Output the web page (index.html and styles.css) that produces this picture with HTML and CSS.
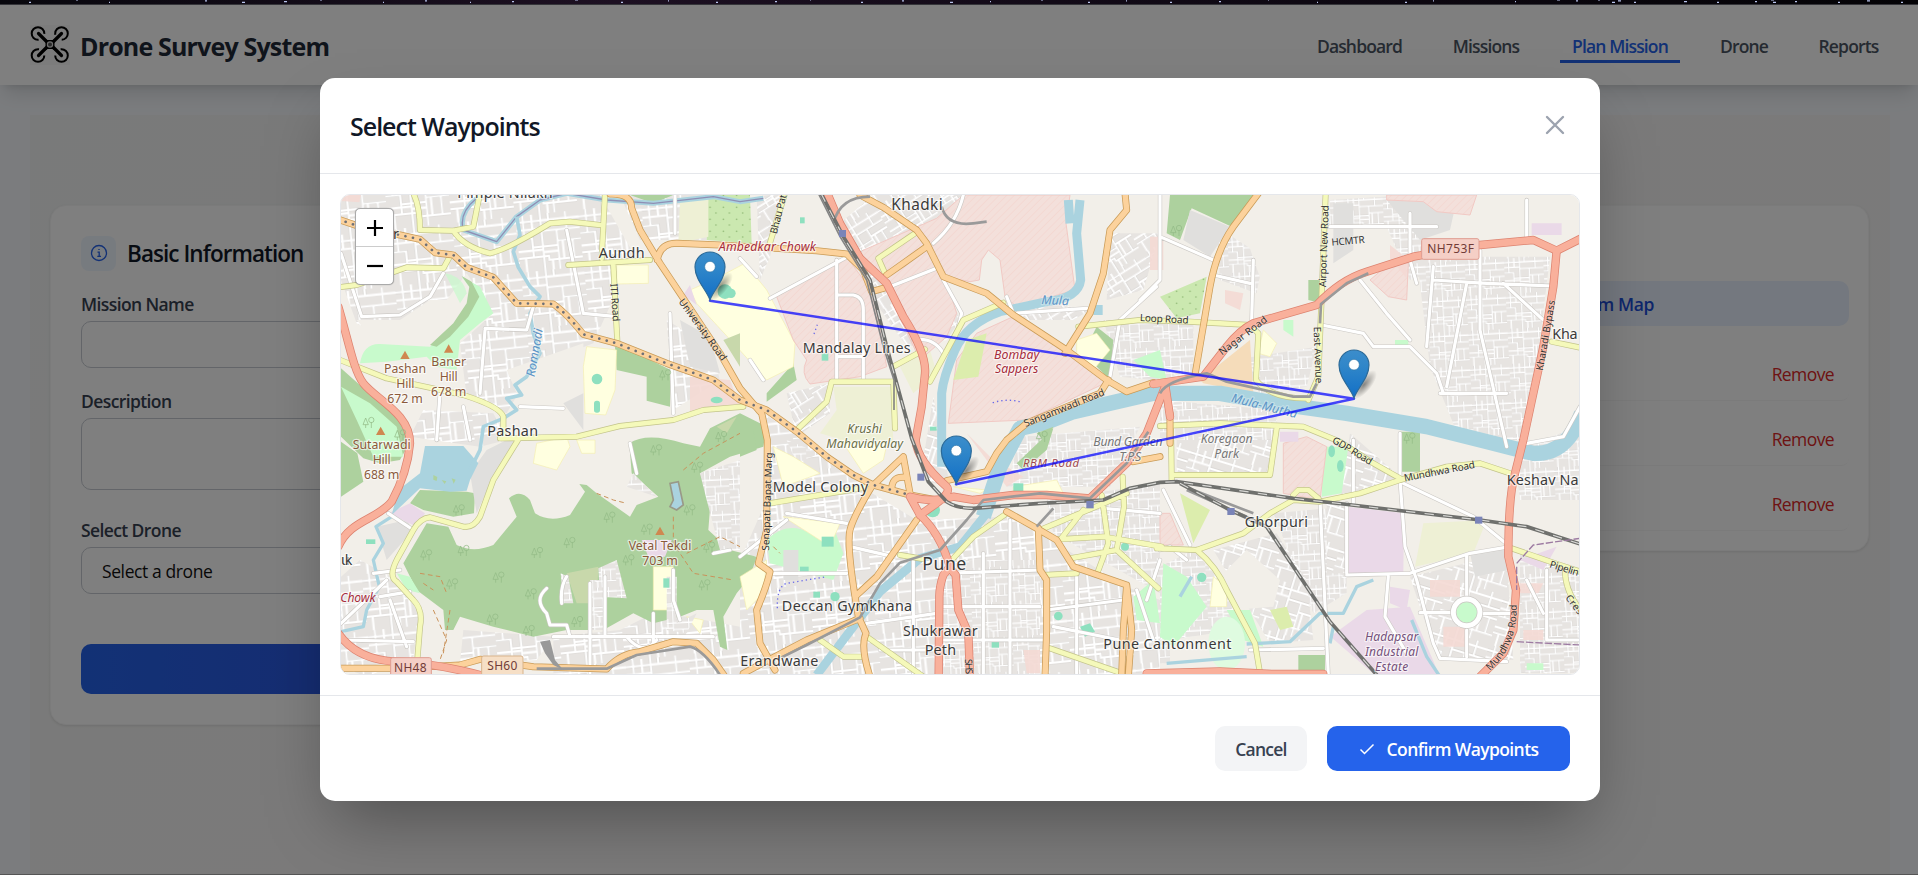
FILE: index.html
```html
<!DOCTYPE html>
<html lang="en">
<head>
<meta charset="utf-8">
<title>Drone Survey System</title>
<link rel="stylesheet" href="styles.css">
</head>
<body>
<svg class="sky" viewBox="0 0 1918 5" preserveAspectRatio="none" aria-hidden="true">
  <g class="stars">
    <path d="M29 3h2M76 0h2M109 3h1M205 1h2M242 3h3M284 2h3M320 0h2M383 3h1M425 1h2M470 3h1M512 2h2M575 0h3M621 3h2M668 1h1M716 3h2M775 2h2M810 0h1M861 3h2M902 1h2M950 3h3M990 2h1M1041 0h2M1088 3h2M1126 1h1M1170 3h2M1219 2h2M1268 0h1M1317 3h1M1405 3h2M1433 1h1M1515 2h1M1557 0h3M1576 1h2M1598 0h2M1612 3h3M1618 1h3M1634 3h2M1684 2h3M1717 3h2M1755 2h2M1771 0h3M1773 3h3M1795 2h2M1838 3h2M1867 1h3M1901 3h2"/>
  </g>
</svg>
<div class="app">
  <header class="topbar">
    <div class="brand">
      <svg class="logo" viewBox="0 0 40 40">
        <g fill="none" stroke="#000" stroke-width="2">
          <circle cx="8" cy="8.500" r="6.300" stroke-dasharray="31 8.600" stroke-dashoffset="-9"/>
          <circle cx="31.500" cy="8.500" r="6.300" stroke-dasharray="31 8.600" stroke-dashoffset="-18"/>
          <circle cx="8" cy="30.500" r="6.300" stroke-dasharray="31 8.600" stroke-dashoffset="1"/>
          <circle cx="31.500" cy="30.500" r="6.300" stroke-dasharray="31 8.600" stroke-dashoffset="-28"/>
          <path d="M8.500 8.500l8 8M31.500 8.500l-8 8M8.500 30.500l8-8M31.500 30.500l-8-8" stroke-width="3.200" stroke-linecap="round"/>
        </g>
        <path d="M13 12l4 3h6l4-3-2.500 5v5l3 5-5-3h-5l-5 3 3-5v-5z"/>
        <circle cx="20" cy="19.500" r="2.600" fill="#555" stroke="#ddd" stroke-width="1.200"/>
      </svg>
      <span class="brand-name">Drone Survey System</span>
    </div>
    <nav class="nav">
      <a class="n1">Dashboard</a><a class="n2">Missions</a><a class="n3 active">Plan Mission</a><a class="n4">Drone</a><a class="n5">Reports</a>
    </nav>
  </header>
  <main class="content">
    <section class="card form-card">
      <h2 class="card-title"><span class="badge"><svg viewBox="0 0 20 20"><circle cx="10" cy="10" r="7.500"/><path d="M8.500 9.200h1.700v4.100M8.300 13.400h3.700"/><path d="M10 6.300v.6" stroke-width="1.900"/></svg></span><span>Basic Information</span></h2>
      <label class="lbl l-name">Mission Name</label>
      <div class="field"></div>
      <label class="lbl l-desc">Description</label>
      <div class="field area"></div>
      <label class="lbl l-drone">Select Drone</label>
      <div class="field"><span class="f-text">Select a drone</span></div>
      <div class="submit"></div>
    </section>
    <section class="card way-card">
      <div class="map-btn">Select from Map</div>
      <div class="rows">
        <div class="row"><span>Remove</span></div>
        <div class="row"><span>Remove</span></div>
        <div class="row"><span>Remove</span></div>
      </div>
    </section>
  </main>
  <div class="overlay">
    <div class="modal">
      <div class="modal-head">
        <h3>Select Waypoints</h3>
        <svg class="close" viewBox="0 0 30 30"><path d="M7 7l16 16M23 7L7 23"/></svg>
      </div>
      <div class="modal-body">
        <div class="map">
<svg class="map-svg" viewBox="63 45 3714 1437" preserveAspectRatio="none">
<defs>
  <pattern id="st" width="190" height="170" patternUnits="userSpaceOnUse" patternTransform="rotate(-6)">
    <rect width="190" height="170" fill="#e7e4e1"/>
    <g fill="none" stroke="#cfcdca" stroke-width="8.500"><path d="M0 20H75V52H190M0 70H44V98H120V85H190M0 128H90V140H190M22 0V70M75 0V170M120 52V170M150 0V52M165 85V140M44 98V128M98 0V20"/></g>
    <g fill="none" stroke="#fff" stroke-width="6.500"><path d="M0 20H190M0 70H44V98H120V85H190M0 128H90V140H190M75 52H190M22 0V70M75 0V170M120 52V170M150 0V52M165 85V140M44 98V128M98 0V20M0 44H75M0 108H75M75 115H120M135 85V140M100 140V170M20 128V170M48 0V44"/></g>
  </pattern>
  <pattern id="st2" href="#st" patternTransform="rotate(17) scale(.9)"/>
  <pattern id="st3" href="#st" patternTransform="rotate(-3) scale(.62)"/>
  <pattern id="st4" href="#st" patternTransform="rotate(-32) scale(.8)"/>
  <pattern id="hatch" width="16" height="16" patternUnits="userSpaceOnUse" patternTransform="rotate(45)"><rect width="16" height="16" fill="#f3e0db"/><path d="M0 0V16" stroke="#f3d2cc" stroke-width="3"/></pattern>
  <pattern id="scrub" width="40" height="36" patternUnits="userSpaceOnUse"><rect width="40" height="36" fill="#cbe8b0"/><circle cx="10" cy="10" r="2.500" fill="#92bb78"/><circle cx="28" cy="27" r="2.500" fill="#92bb78"/></pattern>
  <linearGradient id="pinfill" x1="0" y1="0" x2="0" y2="1"><stop offset="0" stop-color="#3c8dcb"/><stop offset=".35" stop-color="#2f86c9"/><stop offset="1" stop-color="#126fc6"/></linearGradient>
  <radialGradient id="pinshade"><stop offset="0" stop-color="#000" stop-opacity=".45"/><stop offset="1" stop-color="#000" stop-opacity="0"/></radialGradient>
  <g id="tree" fill="none" stroke="#93bb87" stroke-width="2.200"><path d="M-8-14l-8 20h16zM-8 6v10M9-2v18"/><circle cx="9" cy="-8" r="8"/></g>
  <path id="peak" d="M0-13l14 25h-28z" fill="#cf8850"/>
  <g id="pin">
    <ellipse cx="30" cy="-42" rx="54" ry="22" transform="rotate(-50 30 -42)" fill="url(#pinshade)"/>
    <path d="M0-2C-10-32-45-62-45-101A45 45 0 0 1 45-101C45-62 10-32 0-2Z" fill="url(#pinfill)" stroke="#2c6a98" stroke-width="3.500"/>
    <circle cy="-102" r="16" fill="#fff" stroke="#2f75a8" stroke-width="2"/>
  </g>
  <g id="trunk">
    <path d="M55 380C85 480 100 570 130 610C170 660 270 700 270 790C265 850 250 900 215 965C170 1020 90 1020 55 1100"/>
    <path d="M55 1360Q110 1440 230 1445T500 1490"/>
    <path d="M1522 40L1560 130 1620 235 1700 310 1750 410Q1820 520 1815 580L1805 680 1787 780Q1790 840 1880 920Q1895 935 1850 970L1800 1005 1770 950Q1840 970 1900 950L1960 960 2080 945 2180 945 2310 955 2420 850 2480 760 2535 620"/>
    <path d="M2500 612L2650 590 2720 500Q2760 450 2800 430L2990 375Q3060 300 3140 275L3280 230 3480 195 3640 180 3710 212 3790 172"/>
    <path d="M3710 212L3700 320 3670 500 3610 780 3585 880Q3565 950 3565 1130L3588 1230 3580 1350 3550 1420 3480 1490"/>
    <path d="M1800 1005Q1860 1060 1890 1160L1870 1185Q1858 1220 1858 1250L1856 1490M1890 1165L1907 1185 1915 1290 1945 1360 1950 1490M2535 610L2550 710M2480 1480L2700 1474 2860 1482H3010"/>
  </g>
  <g id="primary">
    <path id="dotroad" d="M55 118L120 140 240 165 300 178 345 218 400 225 440 262 520 292 590 370 700 372Q740 400 790 463L890 490 1040 550 1180 600 1260 660 1340 690 1430 755 1520 830 1600 885 1660 915 1770 945 1850 960"/>
    <path d="M870 42Q935 40 935 85L960 150 1020 250 1100 370 1200 520 1260 625 1320 695M1012 240Q1020 190 1070 190L1200 195 1490 212 1580 222 1630 270 1655 335 1700 322"/>
    <path d="M1620 45L1690 82 1790 150 1820 190 1870 290 2000 340 2080 405 2240 510 2360 600 2420 635 2500 608M2415 40L2420 90 2370 150 2350 280 2310 400 2235 520M2815 40L2740 140Q2690 210 2670 320L2625 585M2365 600L2340 640 2120 730 2060 780 2030 820 2000 875 1880 902"/>
    <path d="M1820 200L1750 250 1700 285M1325 700L1342 780 1340 1050 1315 1150 1350 1175Q1340 1220 1310 1290L1320 1390 1365 1470M1655 920Q1600 1010 1590 1050T1605 1250L1670 1190 1790 1020M1655 920L1750 830 1770 940M1715 930Q1715 890 1750 892M1605 1250L1615 1310 1638 1360Q1620 1400 1650 1490M1270 1480L1460 1380 1620 1315"/>
    <path d="M55 1465H240L420 1455 480 1438 640 1460 860 1467Q900 1420 960 1415L1060 1385 1130 1390 1180 1440 1215 1490M2060 995L2150 1045 2210 1080 2260 1160 2420 1215 2410 1350 2405 1490M2155 1045L2160 1170 2180 1200 2180 1350 2175 1490M2420 1215L2435 1350 2425 1490M2550 700L2550 790M2520 830L2440 845"/>
  </g>
  <g id="second">
    <path d="M280 40Q300 80 300 150L400 152Q430 200 510 220Q560 210 690 130L750 125 840 135M480 40L460 140 400 152M855 40L845 235M745 255L990 240M880 255L892 485M55 322L110 315 260 262 370 265 388 232"/>
    <path d="M55 538L200 595 430 645Q540 680 550 710V770M540 775L770 770 900 738 1060 720 1150 690 1270 680M600 770L520 900 480 1010Q460 1045 430 1040L330 1012Q300 1015 280 1050L230 1140Q205 1190 230 1205L280 1260Q310 1290 300 1340L292 1440"/>
    <path d="M1395 40L1345 205M1785 160L1675 235 1695 280M2050 368L1930 420 1830 605M1720 560L1815 508M1430 750L1520 665 1535 605 1720 605 1725 745M2275 440L2460 420 2610 425 2790 435 2815 460 2808 600Q2850 655 2960 655M3017 40L3005 350 2995 590 2965 660"/>
    <path d="M2520 738L2700 730 2950 740 3060 785 3160 850 3240 895M2555 900L2553 740M2560 885H2850L2870 745M2510 1105L2630 1110 2770 1060 2850 1000 2920 960 3000 965 3120 940 3240 900 3380 860 3480 850 3570 880M2920 945L2935 930H2965L2995 955M2630 1110Q2690 1160 2720 1230L2805 1390 2820 1480M3575 1105L3720 1155 3790 1178M3735 1170Q3735 1240 3790 1300M3695 485L3790 505"/>
    <path d="M1350 970L1650 920M2060 1000L1960 1070 1895 1140M2160 1050L2340 975 2420 940M2220 1080L2290 990M2215 1078L2350 1070 2525 1100M2250 1135L2390 1110 2515 1225M2345 945L2365 1090 2330 1185M2408 890L2412 980 2390 1110M2170 1185L2270 1180M2190 1405L2400 1478M1640 1370L1810 1490M1500 1380L1570 1430H1625M1740 1125L1810 1137"/>
  </g>
  <g id="local">
    <path d="M63 220L125 410 240 405 330 350 370 280M495 450L480 640M495 445L620 450 640 380M740 150L790 400 890 410M1065 45V160M1050 400L1060 700M360 640L350 780M430 680L450 780M600 680L730 685M1260 235L1310 290M1290 540L1330 600"/>
    <path d="M1550 240V600M1550 345H1600Q1630 350 1630 390V600M1550 530H1630M1350 355L1620 210M1660 340L1850 265M1930 45Q1910 130 1840 190M1870 300L1925 400 1915 440M1780 480Q1840 470 1870 520M2060 350L2080 400 2300 385M2510 320L2400 420 2370 590"/>
    <path d="M2520 170L2680 240M2520 45V300L2460 360M2680 285L2790 310M2800 240L2795 420M3120 300L3200 400 3270 480M3005 435L3130 460 3160 500H3270L3350 580 3370 640M3480 210V450L3560 800M3440 310L3380 620M3270 100V240L3290 310M3340 260L3320 500M3030 140H3350M3620 60V180M3340 300L3500 310 3700 318M3550 310L3670 420M3780 680L3730 770 3620 790M3360 640L3560 640"/>
    <path d="M3000 960L3025 1485M3240 900L3255 1100 3290 1200 3340 1390 3360 1435 3560 1445M3250 910L3460 1010 3570 1100M3080 970V1180M3080 1185L3270 1180 3450 1120 3570 1100M3440 1125V1260M3300 1298H3390M3480 1300H3580M3440 1350V1430M3205 1190L3195 1310 3260 1420M2520 1110L2550 1100 2600 1140M2520 1140L2480 1260M2530 930L2610 1095M2790 1410L3010 1405M3100 970V780M3240 760V890M3680 1170V1380H3780M3620 1200L3670 1300"/>
    <path d="M205 1000L280 1050M180 1250L270 1235M63 1380L280 1385M63 1330L200 1200M160 1180L240 1170M210 1260L260 1400M680 1225Q640 1260 680 1300L690 1335H740L750 1370M810 1210V1480M855 1190V1370M700 1370H1180M1000 1300V1400M1060 1170V1260L1080 1320M920 1370Q970 1430 1010 1380M1180 1120L1230 1110M930 790L950 880M740 1190Q720 1220 725 1270"/>
    <path d="M1400 1000L1580 1030M1400 1020L1260 1130M1350 1180H1580M1590 1100L1720 1130M1870 1180L2160 1170M1870 1280H2160M1870 1380H2170M1780 1130V1480M1990 1120V1480M2070 1020V1480M1640 1330L1850 1300M1680 1410H1860M2180 1290L2410 1260M2200 1340L2400 1380M2270 1180V1480M2450 1230L2500 1380M2520 1000L2350 985"/>
  </g>
  <g id="rail"><path d="M1503 40L1570 170 1650 300 1700 500 1775 775 1825 905 1880 965Q1910 985 1960 985L2160 970 2350 960 2430 925 2520 907 2570 905 2920 955 3070 972 3480 1020 3620 1040 3790 1095M2580 910L2730 990 2840 1040 3030 1325 3175 1490"/></g>
</defs>
<rect x="60" y="40" width="3730" height="1450" fill="#f2efe9"/>
<g>
  <path fill="url(#st)" d="M63 45H840L940 220 820 490 640 560 560 700 440 650 420 490 520 400 440 280 350 400 210 480 110 430 63 300zM270 770L310 690 520 700 560 780 480 800zM900 45H1160V180H960zM1040 420L1170 500 1200 600 1060 690z"/>
  <path fill="url(#st4)" d="M1560 130L1660 45H1930L1830 190 1920 420 1880 480 1760 500 1640 330zM1400 640L1530 610V700L1430 770zM2080 350L2310 390 2260 420 2090 420zM2370 160H2520L2470 330 2360 360zM1310 50L1390 40 1350 230 1320 300z"/>
  <path fill="url(#st3)" d="M2350 420L2520 430 2620 430V580L2500 600 2400 590zM2690 140L2830 230 2810 340 2700 300zM2740 540L2990 500 2960 620 2820 640zM3030 60L3280 45 3330 280 3270 300 3200 140H3030zM3290 230H3690L3650 560 3600 780 3420 780 3330 560zM2520 660L2870 690V780H2520zM3580 810L3777 740V960H3600z"/>
  <path fill="url(#st)" d="M1260 1140L1340 960 1640 930 1790 1020 2060 1010 2160 1060 2420 1220 2520 1260V1485H1260zM1330 700L1450 780 1640 920 1360 960zM140 1490L63 1460V1190L120 1140 230 1200 300 1290 280 1430zM700 1370L900 1350 1000 1300 1100 1310 1260 1340V1485H700zM430 1350L700 1370 650 1440 420 1450z"/>
  <path fill="url(#st3)" d="M1860 1140H2160V1485H1870zM2180 960L2520 910V1240L2200 1060zM2100 770L2460 740 2370 920 2060 920zM2520 1160L2620 1110 2700 1200 2780 1380 2600 1450H2520zM2860 1000L3080 980V1240L2980 1300 2920 1150zM1400 780L1500 820 1430 850zM3600 1120L3777 1180V1480H3600z"/>
  <path fill="url(#st2)" d="M2570 780H2860L2840 880H2570zM3020 960L3080 970 3070 1180H3020zM3270 1190L3560 1120 3580 1440 3350 1430zM3090 760L3240 890 3060 960zM1840 650L1890 920 1800 900zM2680 1110L2870 1060 2960 1200 2980 1380 2850 1390z"/>
</g>
<g fill="#f2efe9">
  <path d="M110 420L240 420 330 360 400 360 350 490 160 480zM560 570L790 490 790 640 690 690 590 640zM2750 90L2810 45H3010V330L2850 380zM3020 400L3180 350 3190 440 3010 450zM2820 45h200v340h-130zM3330 60H3620V170L3480 190 3330 130zM2640 950L2760 1050 2640 1100zM2700 1190L2780 1110 2880 1200 2860 1280 2740 1290zM2550 1380l130-20 60 110h-190z"/>
</g>
<g fill="#add19e">
  <path d="M320 1030L385 1040 410 1095Q460 1120 520 1095L590 1010 567 955Q600 925 630 960L645 1000Q690 1030 750 1005L795 935 778 912 800 915 830 940 930 1010 950 975 1015 950 935 880 928 790Q980 755 1090 790L1140 800 1170 745 1260 700 1340 740 1330 800 1230 830 1140 880 1172 960 1165 1050 1230 1110 1310 1130 1290 1190 1250 1240 1210 1310 1222 1410 1200 1400 1180 1290 1130 1290 1080 1310 1000 1330 940 1300 850 1350 740 1350 640 1370 520 1340 420 1310 400 1350 375 1350 370 1290 290 1230 250 1150z"/>
  <path d="M63 565L170 660 250 720 268 790 240 840 180 850 130 835 63 770zM63 785L112 820 130 905 63 950zM300 930L440 935 465 940 462 1000 400 1010 310 990 270 970zM885 500L930 510 1052 570 1050 680 980 662V590L890 570zM2550 45H2815L2735 140 2615 85 2580 180 2540 160zM1340 640L1420 550 1430 600 1340 665zM3240 755h60v120h-60zM2290 520L2330 440 2380 480 2370 600zM2935 1425h80v60h-80zM2965 300h40v70l-40-10zM1260 750h40l10 60-50 20zM930 45h130l-60 25z"/>
</g>
<g fill="#c8facc">
  <path d="M120 550Q130 490 180 492L330 500 440 400 462 340 425 290 480 320 520 400 480 430 420 480 410 570 350 560 320 530 200 545zM63 620L150 670 230 740 250 830 160 830 110 720zM230 1180L270 1190 300 1240 260 1230zM1340 1080Q1400 1020 1470 1060L1540 1040 1570 1120 1540 1200 1350 1150zM2440 1250L2500 1200 2520 1330 2450 1320zM2530 1150L2600 1190 2660 1280 2560 1400 2520 1370zM3010 800h75l-20 140-60 10zM2720 1290h70l40 110-60-20zM2440 540l80-30 20 90-50-10zM2890 420h30v50l-30-20zM3620 1450h50v20h-50zM3225 480h40v20h-40z"/>
  <ellipse cx="2720" cy="1390" rx="55" ry="80" fill="#dffbe0"/><path d="M375 280Q430 290 440 340L420 370Z" opacity=".7"/>
</g>
<path d="M330 495L400 430 440 370 448 320 425 288 455 305 478 350 445 410 390 470 350 500z" fill="#add19e"/>
<path fill="url(#scrub)" d="M1165 45H1290L1295 190 1160 180zM1260 400l40 10-10 50-40 10zM2520 350L2660 290 2640 400 2570 415z"/>
<g fill="#ffffe0" stroke="#f5efb0" stroke-width="2">
  <path d="M800 500L890 510 885 630 857 705 795 700 790 560zM890 255H985V310L890 312zM1110 330L1180 300 1275 250 1340 330 1425 490 1420 560 1340 600 1250 500 1130 370zM650 790L740 770 750 800 710 870 640 850zM770 780h55v40h-40zM1000 1160L1060 1160 1040 1290 1000 1290zM2270 480l60-20 40 50-50 60-50-30zM1360 800L1420 830 1500 880 1390 920zM1900 920l100 10-20 10zM2830 450l40 40-20 40-35-10zM1260 1190L1340 1140 1330 1240 1280 1290zM1550 760l160-10-20 90-60 40zM1390 1010L1560 1030 1530 1100zM2680 1190l40 30v60h-50zM2080 920l130-20 20 40-150 5zM1100 1310l50 10-10 40z"/>
</g>
<path fill="#eef0d5" d="M1540 620H1715L1720 790 1600 790 1500 760 1550 690zM1740 560L1830 510 1850 580 1780 640zM3310 1030L3500 1020 3460 1120 3285 1160zM1080 60h85v110l-90 20z"/>
<path fill="#e0dfdd" d="M500 810L560 780 600 790 520 890 470 1000 450 880zM170 1040l90-20 20 30-80 90zM1080 420L1170 470 1200 580 1110 560zM1390 1110h45v90h-45zM2610 90L2730 140 2670 230 2590 180zM3040 70h60v140l-60 40zM790 640l-60 30 60 80zM3450 1120l115-20v70l-100 20zM3200 60h210l-20 90-90 30z"/>
<g fill="url(#hatch)" stroke="#f1c9c4" stroke-width="3">
  <path d="M1370 350L1580 230 1660 340 1700 560 1620 590 1470 612Q1440 580 1460 540L1420 480zM1620 215L1850 115 1930 45H2250L2238 130 2265 330 2090 380 2055 350 2040 240 2005 210 1985 240 1978 300 1950 305 1875 290 1910 400 1880 470 1800 540 1700 330zM1885 730L1910 540 1970 460 2090 405 2240 510 2365 605 2120 720zM3200 45H3470L3450 105 3350 95 3310 65 3200 60zM3150 300L3220 240 3265 250 3260 360 3205 350zM2890 790L2960 770 3020 800 3000 960 2890 940zM2520 1000L2550 1000 2590 1095H2520z"/>
</g>
<path fill="#f4d9d4" d="M1110 590L1230 600 1260 680 1110 700zM63 45h60l-5 22-55-4zM3330 1200h90v50h-90zM3370 1340h70v60h-70zM3210 195l50 40v60l-50-60zM2490 170h40v100h-40zM3600 1210h70l-15 30h-60zM2110 1410h50v70h-40zM1940 760l70 70 100 60-50 30zM3610 1350h60v30h-60zM2715 330l55 10-10 50-45-20z" opacity=".9"/>
<path fill="#ead9e8" d="M3083 980L3252 1000 3250 1180H3083zM3030 1370L3140 1290 3270 1280 3330 1420 3360 1490H3170L3020 1360zM205 1000L270 970 315 1000 290 1040zM3635 130h90v35h-90zM965 1080h90l-20 50h-50zM1090 345l20-30 20 60zM3600 1140l110-40-40 70zM3210 1220l60 10-10 60-50-20zM2880 755h55v30h-55z"/>
<path fill="#f5dcba" d="M2640 600L2790 480 2800 640 2650 610z"/>
<path fill="#dcedad" d="M1900 600L1940 480 2000 460 1975 590zM2580 940L2670 990 2620 1090zM2850 1290l50-10 20 60-40 10z"/>
<path fill="#c8d8ab" d="M740 1180L835 1160 830 1270H770zM1210 480L1260 460V560zM1190 740l60-30-30 50z"/>
<path fill="url(#st3)" d="M722 1180L745 1190 760 1270H730zM835 1165L890 1140 920 1255 840 1250zM940 880l70 70-90-30zM1140 880L1260 840V1110H1200L1160 960zM810 1200h45v150h-45zM1040 1190h30v140l60-30-30 60-60-10z"/>
<g fill="#aad3df">
  <path d="M315 798H430L475 850 450 900 440 932 390 935 300 925 215 1005 235 930 300 880zM2320 375h28v30h-28z"/>
</g>
<g fill="none" stroke="#aad3df" stroke-linejoin="round">
  <path d="M470 55Q415 100 430 150L530 185 590 110 660 60 740 40 860 60 1000 70 1180 50 1260 65 1330 55" stroke-width="15"/>
  <path d="M470 55Q415 100 430 150L530 185 590 110 660 60 740 40 860 60 1000 70 1180 50 1260 65 1330 55" stroke="#8f8fb5" stroke-width="4"/>
  <path d="M590 110L600 165 580 215 595 262 630 320 660 350 630 400 640 460 660 520 620 590 585 615 605 645 560 655 590 690 550 715 490 740 480 810 450 870" stroke-width="11"/>
  <path d="M2245 60L2250 130M2280 60L2270 160 2282 300Q2275 355 2180 365L2040 395Q1940 430 1905 510T1865 640V860" stroke-width="27"/>
  <path d="M1490 1485L1600 1340 1680 1235 1800 1135 1920 1100 2000 1000" stroke-width="26"/>
  <path d="M1990 1010L2040 860 2100 745 2170 730 2260 695 2500 640 2700 640 2900 675 3080 700 3320 740 3500 785 3640 820Q3740 825 3785 700" stroke-width="46"/>
  <path d="M215 1010L168 1040 190 1090 160 1140 178 1220 140 1290 130 1340 63 1355M2780 1392L2910 1385 3000 1300 3070 1300 3110 1220 3160 1200M3030 1390L3040 1340M3275 1320L3320 1430 3360 1490M2540 1450L2780 1430M2580 1250l35-60" stroke-width="10"/>
</g>
<path fill="#add19e" d="M2090 850L2200 745 2180 810 2110 870zM2150 760l50-20-20 50zM340 885l12 6-2 12-10-4zM365 900l14 4-5 8zM395 895l12 4-6 12z"/>
<g fill="#8ee0bf"><circle cx="831" cy="597" r="16"/><rect x="822" y="662" width="18" height="36" rx="8"/><ellipse cx="1190" cy="660" rx="18" ry="10"/><circle cx="1215" cy="335" r="22"/><circle cx="1233" cy="340" r="14"/><rect x="1440" y="112" width="14" height="18"/><rect x="1505" y="1070" width="36" height="30"/><ellipse cx="3035" cy="814" rx="10" ry="18"/><ellipse cx="3061" cy="858" rx="10" ry="18"/><rect x="2080" y="910" width="30" height="24"/><rect x="1030" y="1195" width="18" height="28"/><rect x="1480" y="1235" width="20" height="18"/><circle cx="1545" cy="1250" r="14"/><circle cx="2215" cy="1308" r="13"/><path d="M2280 1340l30-10 15 25-30 15z"/><circle cx="2645" cy="1192" r="14"/><rect x="2015" y="1385" width="22" height="18"/><rect x="1440" y="1160" width="26" height="20"/><circle cx="2415" cy="1100" r="12"/><circle cx="1838" cy="990" r="22"/><rect x="1505" y="520" width="20" height="22"/><rect x="1830" y="740" width="20" height="12"/><rect x="138" y="1078" width="28" height="14"/></g>
<g class="street"><use href="#local" stroke="#cbc8c4" stroke-width="13"/><use href="#local" stroke="#fff" stroke-width="9.500"/></g>
<circle cx="3440" cy="1297" r="40" fill="#c8facc" stroke="#cbc8c4" stroke-width="19"/>
<circle cx="3440" cy="1297" r="40" fill="none" stroke="#fff" stroke-width="15"/>
<g class="street">
  <use href="#second" stroke="#c3c48b" stroke-width="18"/><use href="#second" stroke="#f5f9ba" stroke-width="14"/>
  <use href="#primary" stroke="#c99b57" stroke-width="21"/><use href="#primary" stroke="#fcd29c" stroke-width="16.500"/>
  <use href="#dotroad" stroke="#6e7077" stroke-width="8" stroke-dasharray="0.100 23"/>
  <use href="#trunk" stroke="#dd8370" stroke-width="25"/><use href="#trunk" stroke="#f9b09b" stroke-width="20.500"/>
</g>
<g fill="none" stroke="#9a9a9a" stroke-width="8" stroke-linejoin="round">
  <path d="M1385 1432L1460 1395 1620 1312 1680 1210 1740 1148 1860 1110 1940 1020 1990 960 2160 940 2310 955 2420 850 2485 755M2520 640Q2540 600 2660 580L2720 605 2920 650 2970 650 2990 610M3000 430L3003 372 3080 310 3145 280M650 1466H860L950 1425 1110 1400Q1150 1410 1200 1485M1540 130Q1560 50 1650 50M1865 80Q1880 140 1960 130L2000 125M2600 930L2780 1010M2620 930L2800 1000M2150 1040L2200 985"/>
</g>
<g fill="none"><use href="#rail" stroke="#6f706d" stroke-width="11"/><use href="#rail" stroke="#d9d9d6" stroke-width="3.500" stroke-dasharray="28 28"/></g>
<path d="M1495 40L1560 170 1640 300 1690 500 1722 600V690" fill="none" stroke="#858585" stroke-width="5"/>
<path d="M660 1385L690 1380 705 1440 730 1470 700 1455 675 1420z" fill="#999"/>
<g fill="none" stroke="#c9925a" stroke-width="3" stroke-dasharray="14 10"><path d="M300 1180l60 10 20 50M310 1210l30 20M340 1290l40 90-20 60M390 1290l-20 130M830 940l50 20 40 10M1090 870l60-50 110-60M1060 1010v80l60 90 120 20M1100 1120l100-50 60 30M1360 1100l20 20"/></g>
<g fill="none" stroke="#6a6ae8" stroke-width="4" stroke-dasharray="4 9"><path d="M1482 462l10-28M2018 668Q2060 655 2100 665M1372 1285Q1370 1220 1400 1210L1520 1190"/></g>
<path d="M1050 910l10 50-10 20 20 10 20-15-15-70z" fill="#aad3df" stroke="#998" stroke-width="5"/>
<g fill="none" stroke="#9d7ba2" stroke-width="4" stroke-dasharray="22 6"><path d="M3590 1150L3640 1095 3780 1075M3590 1385L3780 1395M3590 1160V1230"/></g>
<g>
  <use href="#tree" x="1008" y="810"/><use href="#tree" x="1131" y="862"/><use href="#tree" x="868" y="1012"/><use href="#tree" x="980" y="1048"/><use href="#tree" x="748" y="1088"/><use href="#tree" x="651" y="1118"/><use href="#tree" x="318" y="1125"/><use href="#tree" x="430" y="1112"/><use href="#tree" x="535" y="1192"/><use href="#tree" x="396" y="1212"/><use href="#tree" x="632" y="1242"/><use href="#tree" x="517" y="1318"/><use href="#tree" x="626" y="1352"/><use href="#tree" x="771" y="1325"/><use href="#tree" x="925" y="1140"/><use href="#tree" x="1108" y="990"/><use href="#tree" x="1167" y="1102"/><use href="#tree" x="1153" y="1215"/><use href="#tree" x="1203" y="770"/><use href="#tree" x="145" y="728"/><use href="#tree" x="240" y="765"/><use href="#tree" x="3268" y="775"/><use href="#tree" x="2568" y="152"/><use href="#tree" x="2165" y="770"/><use href="#tree" x="416" y="990"/><use href="#tree" x="1035" y="585"/>
</g>
<g fill="#7a84b8"><rect x="1557" y="150" width="21" height="21"/><rect x="1792" y="881" width="21" height="21"/><rect x="2299" y="963" width="22" height="22"/><rect x="2722" y="984" width="22" height="21"/><rect x="3465" y="1010" width="22" height="21"/></g>
<use href="#peak" x="255" y="525"/><use href="#peak" x="386" y="506"/><use href="#peak" x="182" y="753"/><use href="#peak" x="1020" y="1053"/>
<g class="town">
  <text x="555" y="54" textLength="286">Pimple Nilakh</text><text x="228" y="176">r</text>
  <text x="905" y="233" textLength="137">Aundh</text><text x="578" y="767" textLength="152">Pashan</text>
  <text class="big" x="1791" y="91" textLength="154">Khadki</text><text x="1610" y="518" textLength="324">Mandalay Lines</text>
  <text x="1501" y="935" textLength="286">Model Colony</text><text class="city" x="1873" y="1169" textLength="132">Pune</text>
  <text x="1581" y="1292" textLength="391">Deccan Gymkhana</text><text x="1861" y="1368" textLength="224">Shukrawar</text><text x="1861" y="1425" textLength="94">Peth</text>
  <text x="1378" y="1457" textLength="234">Erandwane</text><text x="2542" y="1407" textLength="384">Pune Cantonment</text>
  <text x="2869" y="1040" textLength="190">Ghorpuri</text><text x="3735" y="477" textLength="76">Kha</text><text x="3668" y="915" textLength="216">Keshav Na</text><text x="80" y="1154" textLength="34">uk</text>
</g>
<g class="hill">
  <text x="255" y="578" textLength="126">Pashan</text><text x="256" y="623" textLength="54">Hill</text><text x="255" y="668" textLength="106">672 m</text>
  <text x="386" y="558" textLength="104">Baner</text><text x="386" y="603" textLength="54">Hill</text><text x="386" y="648" textLength="106">678 m</text>
  <text x="185" y="807" textLength="174">Sutarwadi</text><text x="185" y="852" textLength="54">Hill</text><text x="185" y="896" textLength="106">688 m</text>
  <text x="1020" y="1109" textLength="188">Vetal Tekdi</text><text x="1020" y="1154" textLength="106">703 m</text>
</g>
<g class="mil">
  <text x="1342" y="212" textLength="291">Ambedkar Chowk</text><text x="2090" y="536" textLength="136">Bombay</text><text x="2090" y="580" textLength="130">Sappers</text>
  <text x="2193" y="862" textLength="168" class="rbm">RBM Road</text><text x="114" y="1267" textLength="106">Chowk</text>
</g>
<g class="farm"><text x="1634" y="758" textLength="104">Krushi</text><text x="1634" y="803" textLength="230">Mahavidyalay</text></g>
<g class="suburb"><text x="2424" y="797" textLength="208">Bund Garden</text><text x="2431" y="842" textLength="66">T.P.S</text><text x="2720" y="790" textLength="156">Koregaon</text><text x="2720" y="834" textLength="74">Park</text></g>
<g class="ind"><text x="3215" y="1383" textLength="160">Hadapsar</text><text x="3215" y="1428" textLength="160">Industrial</text><text x="3215" y="1473" textLength="100">Estate</text></g>
<g class="river"><text x="2205" y="374" textLength="82" transform="rotate(3 2205 374)">Mula</text><text transform="translate(2830 690) rotate(14)" textLength="202">Mula-Mutha</text><text transform="translate(656 520) rotate(-80)" textLength="146">Romnadi</text></g>
<g class="road">
  <text transform="translate(875 368) rotate(86)" textLength="114">ITI Road</text><text transform="translate(1140 455) rotate(54)" textLength="222">University Road</text>
  <text transform="translate(1385 105) rotate(-76)" textLength="120">Bhau Pat</text><text transform="translate(2236 693) rotate(-22)" textLength="258">Sangamwadi Road</text>
  <text transform="translate(2532 427) rotate(3)" textLength="146">Loop Road</text><text transform="translate(2775 475) rotate(-37)" textLength="172">Nagar Road</text>
  <text transform="translate(3022 199) rotate(-88)" textLength="246">Airport New Road</text><text transform="translate(2984 525) rotate(88)" textLength="170">East Avenue</text>
  <text transform="translate(3085 193) rotate(-5)" textLength="100">HCMTR</text><text transform="translate(3687 468) rotate(-80)" textLength="214">Kharadi Bypass</text>
  <text transform="translate(3092 821) rotate(31)" textLength="134">GDP Road</text><text transform="translate(3360 884) rotate(-11)" textLength="216">Mundhwa Road</text>
  <text transform="translate(1352 965) rotate(-88)" textLength="294">Senapati Bapat Marg</text><text transform="translate(3730 1175) rotate(17)" textLength="90">Pipelin</text>
  <text transform="translate(3755 1280) rotate(52)" textLength="66">Cres</text><path id="mund" d="M3510 1473Q3595 1395 3590 1270" fill="none"/><text class="onpath"><textPath href="#mund" textLength="222">Mundhwa Road</textPath></text>
  <text transform="translate(1936 1460) rotate(88)" textLength="46">SHS</text>
</g>
<g class="shield"><rect x="3305" y="176" width="172" height="62" rx="6"/><rect x="212" y="1433" width="122" height="60" rx="6"/><rect class="sh" x="485" y="1428" width="124" height="60" rx="6"/>
  <text x="3392" y="220" textLength="140">NH753F</text><text x="271" y="1477" textLength="98">NH48</text><text x="547" y="1471" textLength="90">SH60</text></g>
<path d="M1170 362L3102 656 1908 913" fill="none" stroke="#00f" stroke-opacity=".72" stroke-width="7.500" stroke-linejoin="round" stroke-linecap="round"/>
<use href="#pin" x="1170" y="362"/><use href="#pin" x="3102" y="656"/><use href="#pin" x="1909" y="914"/>
</svg>
          <div class="zoomer">
            <svg viewBox="0 0 37 37"><path d="M11 19h16M19 11v16"/></svg>
            <svg viewBox="0 0 37 37"><path d="M11 19h16"/></svg>
          </div>
        </div>
      </div>
      <div class="modal-foot">
        <div class="btn cancel"><span>Cancel</span></div>
        <div class="btn confirm"><svg viewBox="0 0 16 16"><path d="M1.500 8.500l4 4 9-9"/></svg><span>Confirm Waypoints</span></div>
      </div>
    </div>
  </div>
</div>
</body>
</html>
```
FILE: styles.css
```css
* { box-sizing: border-box; }
body { margin: 0; width: 1918px; height: 875px; overflow: hidden; background: #0a0910; font-family: "Open Sans", "Noto Sans", sans-serif; font-size: 17.5px; line-height: 25px; color: #111827; }
.sky { display: block; width: 100%; height: 5px; background: linear-gradient(90deg, #08070d, #1d1022 32%, #120a17 55%, #040306); border-bottom: 1px solid #35353a; }
.stars { stroke: #b9c4ee; stroke-width: 1.5; fill: none; }
.app { position: relative; height: 870px; background: #f6f9fd; border-bottom: 1px solid #555; display: flex; flex-direction: column; overflow: hidden; }
.topbar { flex: none; height: 80px; background: #fff; display: flex; justify-content: space-between; padding: 0 29px 0 30px; box-shadow: 0 12px 19px -4px rgba(0,0,0,.13), 0 5px 8px -5px rgba(0,0,0,.12); position: relative; }
.brand { display: flex; gap: 10px; }
.logo { width: 40px; height: 40px; margin-top: 20px; background: #f8f8f8; }
.brand-name { font-size: 25px; font-weight: 700; line-height: 34px; margin-top: 24px; letter-spacing: -.83px; color: #1f2937; white-space: nowrap; }
.nav { display: flex; padding-top: 25px; gap: 30px; }
.nav a { height: 33px; line-height: 33px; text-align: center; font-weight: 600; color: #4b5563; letter-spacing: -.85px; white-space: nowrap; }
.n1 { width: 105px; } .n2 { width: 88px; } .n3 { width: 120px; } .n4 { width: 68px; } .n5 { width: 81px; }
.nav .active { color: #2563eb; border-bottom: 3px solid #2563eb; }
.content { flex: 1; margin: 30px 28px 0 30px; padding: 90px 20px 0 20px; display: grid; grid-template-columns: 1203px 586px; gap: 30px; align-items: start; background: linear-gradient(135deg, #f3f5f5, #f6f5f4 40%, #f5f5f5); }
.card { background: #fff; border-radius: 16px; border: 1px solid #f6f6f6; box-shadow: 0 1px 3px rgba(0,0,0,.1); }
.form-card { height: 520px; padding: 30px; }
.card-title { margin: 0; height: 34px; display: flex; gap: 11px; align-items: center; font-size: 22.5px; font-weight: 600; letter-spacing: -.95px; }
.badge { width: 35px; height: 35px; border-radius: 8px; background: #eff6ff; display: grid; place-items: center; }
.badge svg { width: 20px; height: 20px; fill: none; stroke: #2563eb; stroke-width: 1.3; }
.lbl { display: block; height: 25px; font-weight: 600; color: #374151; letter-spacing: -.6px; }
.l-name { margin-top: 22px; margin-bottom: 4px; } .l-desc { margin-top: 21px; margin-bottom: 4px; } .l-drone { margin-top: 28px; margin-bottom: 4px; }
.field { height: 47px; border: 1px solid #c7cbd2; border-radius: 10px; padding: 11px 20px; color: #111; letter-spacing: -.4px; }
.area { height: 72px; }
.submit { height: 50px; margin-top: 50px; border-radius: 10px; background: linear-gradient(90deg, #2563eb, #4338ca); }
.way-card { height: 346px; padding: 75px 19px 0; }
.map-btn { height: 45px; border-radius: 10px; background: #e8f1ff; color: #1d4ed8; font-weight: 600; text-align: right; padding: 11px 195px 0 0; letter-spacing: -.4px; white-space: nowrap; }
.rows { padding-top: 10px; }
.row { height: 65px; border-bottom: 1px solid #f7f7f7; border-radius: 8px; display: flex; justify-content: flex-end; align-items: center; padding: 13px 15px 0 0; color: #dc2626; letter-spacing: -.6px; }
.overlay { position: absolute; inset: 0; background: rgba(0,0,0,.5); display: flex; justify-content: center; padding-top: 73px; }
.modal { width: 1280px; height: 723px; margin-left: 2px; background: #fff; border-radius: 15px; box-shadow: 0 31px 62px -15px rgba(0,0,0,.35); display: flex; flex-direction: column; }
.modal-head { height: 96px; border-bottom: 1px solid #e5e7eb; display: flex; justify-content: space-between; padding: 0 30px; }
.modal-head h3 { margin: 31px 0 0; font-size: 25px; font-weight: 600; line-height: 34px; letter-spacing: -1px; color: #111827; }
.close { width: 30px; height: 30px; margin: 32px 0 0; fill: none; stroke: #9ca3af; stroke-width: 2.4; stroke-linecap: round; }
.modal-body { padding: 20px; }
.map { position: relative; height: 481px; border: 1px solid #e5e7eb; border-radius: 10px; overflow: hidden; }
.map-svg { display: block; width: 100%; height: 100%; font-family: "Noto Sans", sans-serif; }
.map-svg text { text-anchor: middle; paint-order: stroke; stroke: #fff; stroke-opacity: .65; stroke-width: 7px; stroke-linejoin: round; }
.street { fill: none; stroke-linecap: round; stroke-linejoin: round; }
.town { font-size: 43px; fill: #3a3a3a; } .town .big { font-size: 46px; } .town .city { font-size: 53px; }
.hill { font-size: 37px; fill: #8a5a3c; }
.mil { font-size: 37px; font-style: italic; fill: #a62c3c; } .mil .rbm { font-size: 34px; fill: #a0484e; }
.farm { font-size: 37px; font-style: italic; fill: #6b6f49; }
.suburb { font-size: 37px; font-style: italic; fill: #777; }
.ind { font-size: 36px; font-style: italic; fill: #75517a; }
.river { font-size: 37px; font-style: italic; fill: #5c94c6; }
.map-svg .river text { stroke-opacity: .3; }
.road { font-size: 30px; fill: #333; }
.map-svg .road text { stroke-opacity: .3; stroke-width: 4px; }
.map-svg .onpath { text-anchor: start; }
.shield rect { fill: #f5cfc6; stroke: #df9d91; stroke-width: 3; } .shield .sh { fill: #f6dfc6; stroke: #d8b48b; }
.map-svg .shield text { font-size: 36px; fill: #713c37; stroke: none; }
.zoomer { position: absolute; left: 14px; top: 13px; width: 39px; height: 77px; border: 1px solid #aaa; border-radius: 5px; background: #fff; box-shadow: 0 0 1px rgba(0,0,0,.4); }
.zoomer svg { display: block; width: 37px; height: 37px; fill: none; stroke: #000; stroke-width: 2.2; }
.zoomer svg + svg { height: 38px; border-top: 1px solid #ccc; }
.modal-foot { flex: 1; border-top: 1px solid #e5e7eb; display: flex; justify-content: flex-end; gap: 20px; padding: 30px 30px 0; }
.btn { height: 45px; border-radius: 10px; display: flex; align-items: center; justify-content: center; gap: 12px; font-weight: 600; white-space: nowrap; padding-top: 1px; }
.cancel { width: 92px; background: #f3f4f6; color: #374151; letter-spacing: -.75px; }
.confirm { width: 243px; background: #2563eb; color: #fff; letter-spacing: -.6px; }
.confirm svg { width: 16px; height: 16px; fill: none; stroke: #fff; stroke-width: 1.5; }
```
